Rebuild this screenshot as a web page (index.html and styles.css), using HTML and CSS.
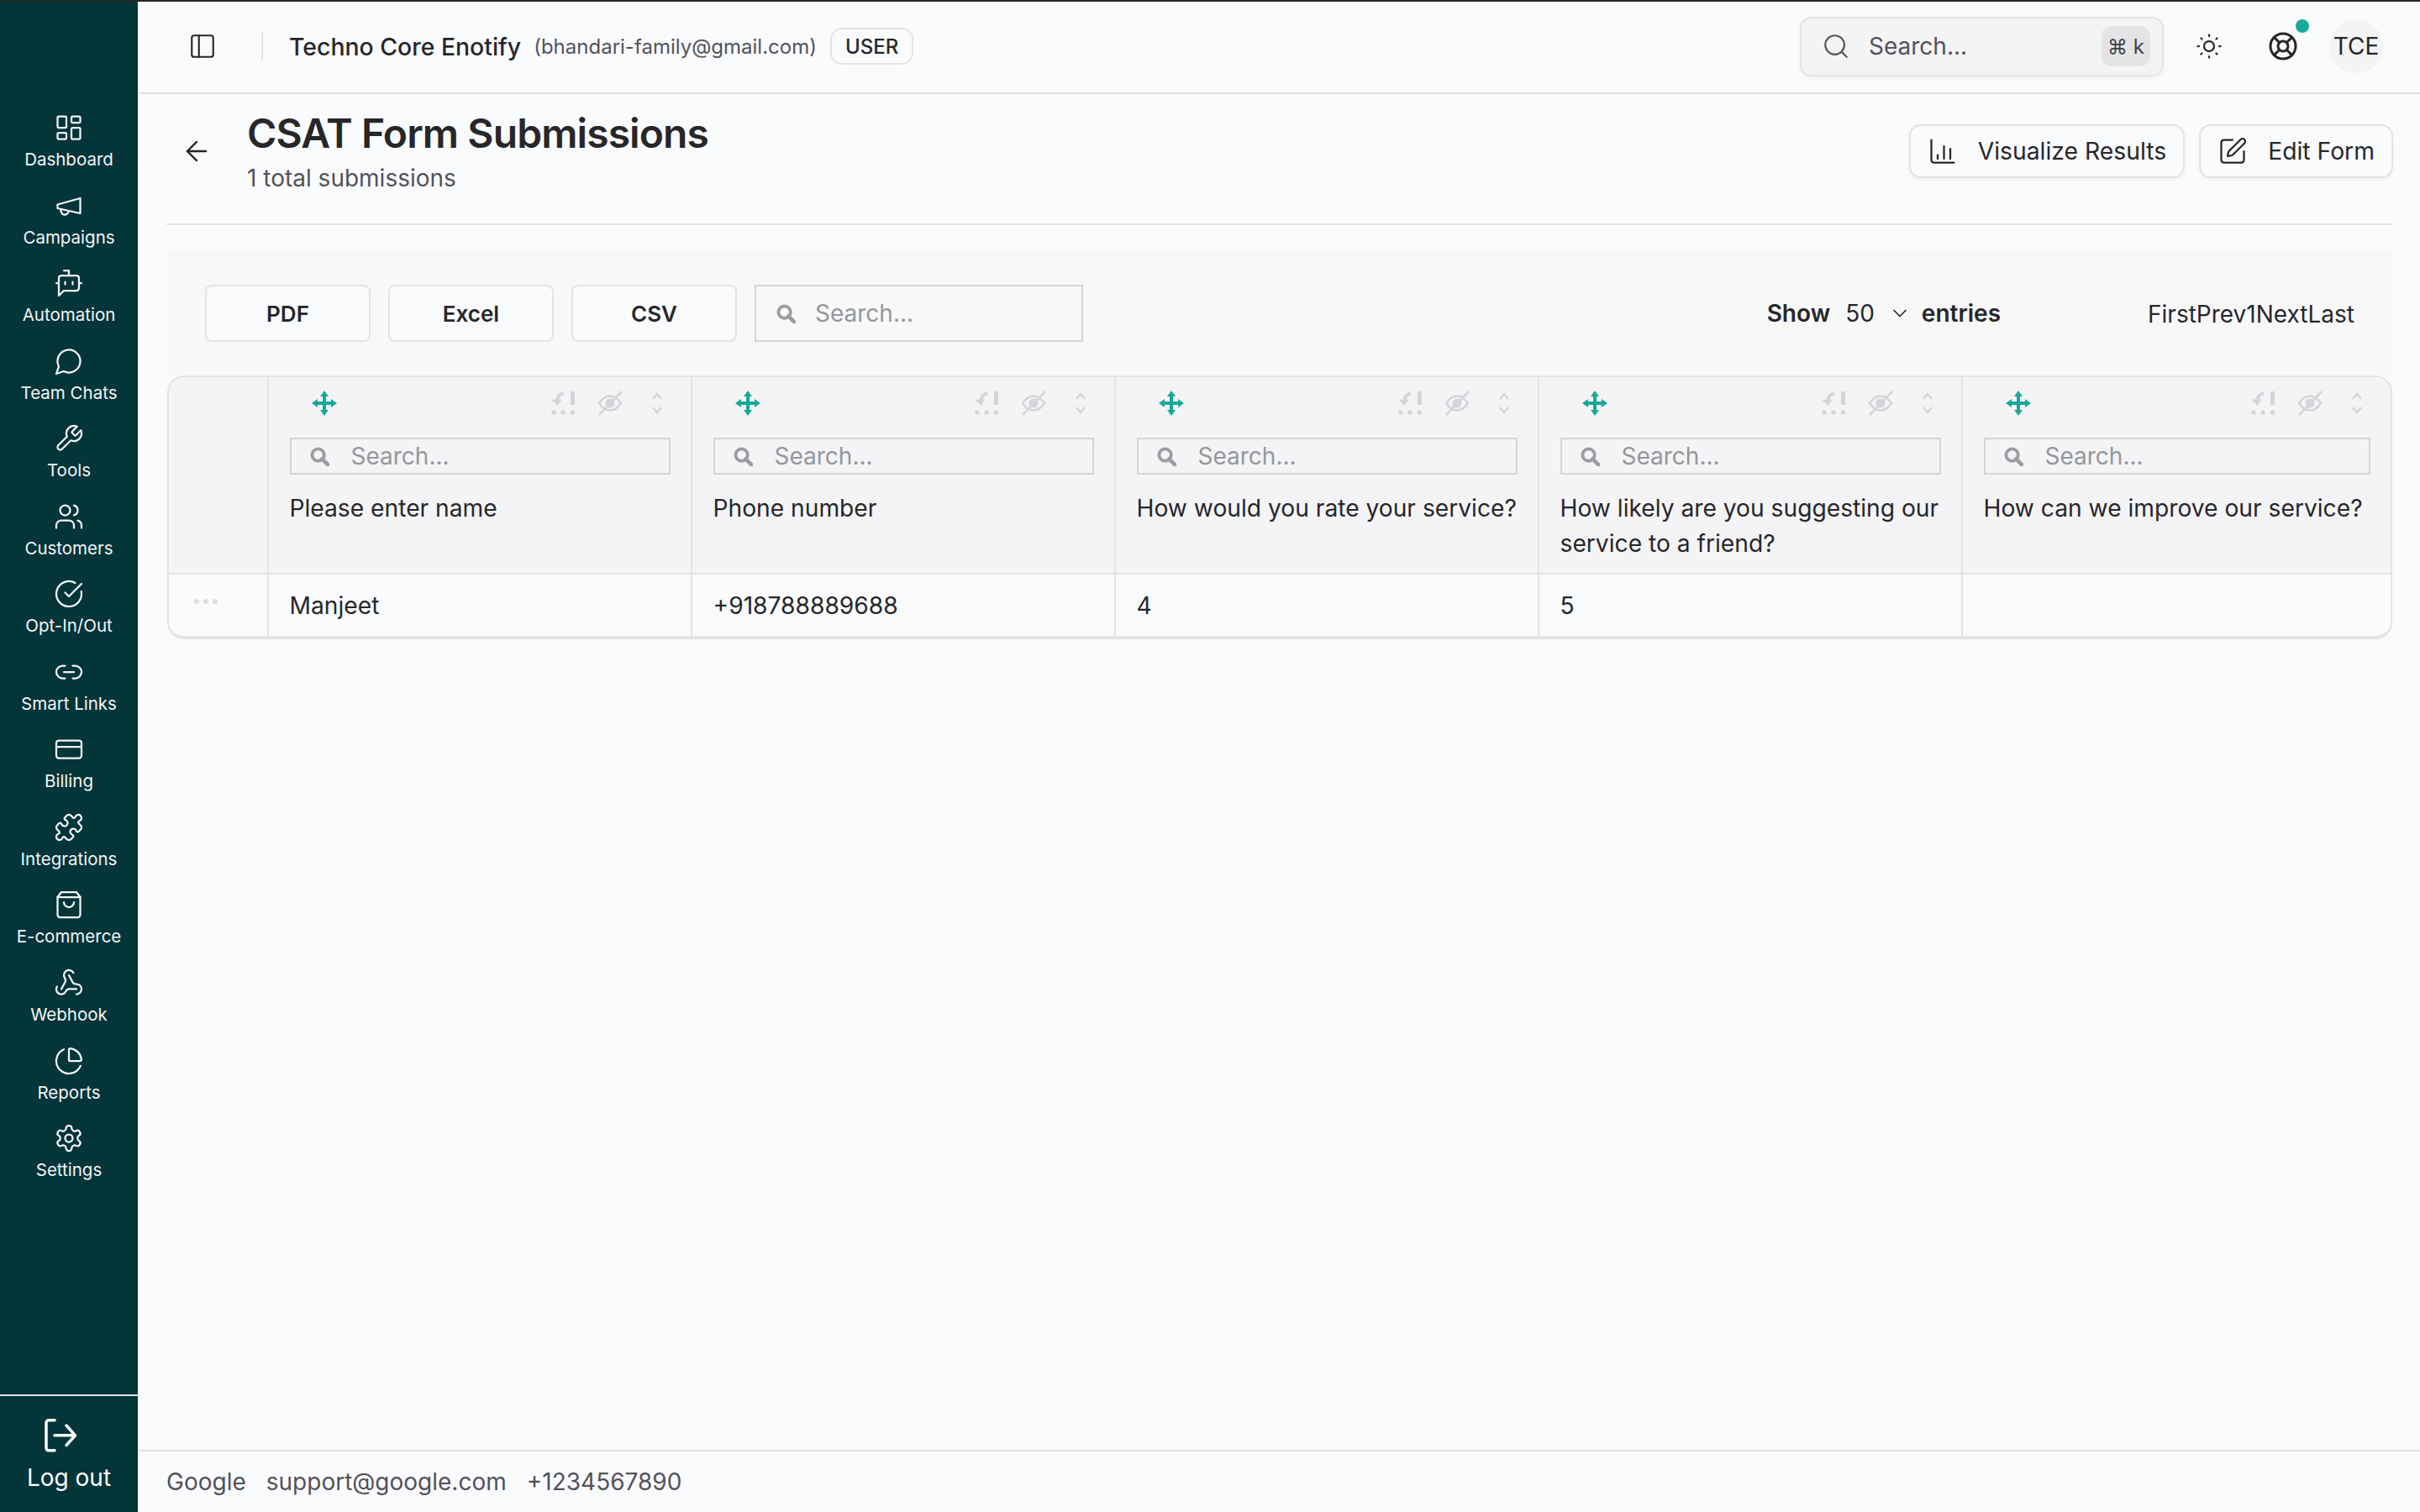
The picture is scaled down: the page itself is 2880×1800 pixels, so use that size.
FILE: index.html
```html
<!DOCTYPE html>
<html lang="en">
<head>
    <meta charset="UTF-8">
    <meta name="viewport" content="width=device-width, initial-scale=1.0">
    <title>CSAT Form Submissions</title>
    <link rel="stylesheet" href="styles.css">
</head>
<body>
<svg class="sprite" xmlns="http://www.w3.org/2000/svg">
    <symbol id="i-move" viewBox="0 0 30 30">
        <path d="M13 5h4v8h8v4h-8v8h-4v-8H5v-4h8z" fill="currentColor"/>
        <path d="M15 0l5 7H10zM15 30l-5-7h10zM0 15l7-5v10zM30 15l-7 5V10z" fill="currentColor"/>
    </symbol>
    <symbol id="i-sort" viewBox="0 0 28 28">
        <path d="M15 2.500C10.500 3 8 6 7.500 10" fill="none" stroke="currentColor" stroke-width="3.800"/>
        <path d="M0 9.500h12.500l-5 7.500z" fill="currentColor"/>
        <rect x="23" y="0" width="5" height="16" fill="currentColor"/>
        <circle cx="3" cy="25" r="2.700" fill="currentColor"/>
        <circle cx="14" cy="25" r="2.700" fill="currentColor"/>
        <circle cx="25.500" cy="25" r="2.700" fill="currentColor"/>
    </symbol>
    <symbol id="i-eye" viewBox="0 0 30 30">
        <path d="M2 15C6 9 10 6.500 15 6.500S24 9 28 15c-4 6-8 8.500-13 8.500S6 21 2 15z" fill="none" stroke="currentColor" stroke-width="2.600"/>
        <circle cx="15" cy="15" r="5.500" fill="currentColor"/>
        <path d="M2 29L29 1" stroke="currentColor" stroke-width="2.600"/>
    </symbol>
    <symbol id="i-chevs" viewBox="0 0 12 28">
        <path d="M1 9l5-6 5 6M1 19l5 6 5-6" fill="none" stroke="currentColor" stroke-width="2.600"/>
    </symbol>
    <symbol id="i-find" viewBox="0 0 24 24">
        <circle cx="10" cy="10" r="7.500" fill="none" stroke="currentColor" stroke-width="4"/>
        <path d="M15 15l7 7" stroke="currentColor" stroke-width="5" stroke-linecap="round"/>
    </symbol>
</svg>

<div class="app">
    <aside class="sidebar">
        <nav class="side-nav">
            <a class="side-item"><svg class="ico" viewBox="0 0 24 24"><rect x="3" y="3" width="7" height="9" rx="1"/><rect x="14" y="3" width="7" height="5" rx="1"/><rect x="14" y="12" width="7" height="9" rx="1"/><rect x="3" y="16" width="7" height="5" rx="1"/></svg><span>Dashboard</span></a>
            <a class="side-item"><svg class="ico" viewBox="0 0 24 24"><path d="m3 11 18-5v12L3 14v-3z"/><path d="M11.6 16.800a3 3 0 1 1-5.800-1.600"/></svg><span>Campaigns</span></a>
            <a class="side-item"><svg class="ico" viewBox="0 0 24 24"><path d="M12 6V2H8"/><path d="m8 18-4 4V8a2 2 0 0 1 2-2h12a2 2 0 0 1 2 2v8a2 2 0 0 1-2 2Z"/><path d="M2 12h2"/><path d="M9 11v2"/><path d="M15 11v2"/><path d="M20 12h2"/></svg><span>Automation</span></a>
            <a class="side-item"><svg class="ico" viewBox="0 0 24 24"><path d="M7.900 20A9 9 0 1 0 4 16.100L2 22Z"/></svg><span>Team Chats</span></a>
            <a class="side-item"><svg class="ico" viewBox="0 0 24 24"><path d="M14.700 6.300a1 1 0 0 0 0 1.400l1.600 1.600a1 1 0 0 0 1.400 0l3.770-3.770a6 6 0 0 1-7.940 7.940l-6.910 6.910a2.120 2.120 0 0 1-3-3l6.910-6.910a6 6 0 0 1 7.940-7.940l-3.760 3.760z"/></svg><span>Tools</span></a>
            <a class="side-item"><svg class="ico" viewBox="0 0 24 24"><path d="M16 21v-2a4 4 0 0 0-4-4H6a4 4 0 0 0-4 4v2"/><circle cx="9" cy="7" r="4"/><path d="M22 21v-2a4 4 0 0 0-3-3.870"/><path d="M16 3.130a4 4 0 0 1 0 7.750"/></svg><span>Customers</span></a>
            <a class="side-item"><svg class="ico" viewBox="0 0 24 24"><path d="M21.800 10A10 10 0 1 1 17 3.340"/><path d="m9 11 3 3L22 4"/></svg><span>Opt-In/Out</span></a>
            <a class="side-item"><svg class="ico" viewBox="0 0 24 24"><path d="M9 17H7A5 5 0 0 1 7 7h2"/><path d="M15 7h2a5 5 0 1 1 0 10h-2"/><path d="M8 12h8"/></svg><span>Smart Links</span></a>
            <a class="side-item"><svg class="ico" viewBox="0 0 24 24"><rect x="2" y="5" width="20" height="14" rx="2"/><path d="M2 10h20"/></svg><span>Billing</span></a>
            <a class="side-item"><svg class="ico" viewBox="0 0 24 24"><path d="M19.439 7.850c-.049.322.059.648.289.878l1.568 1.568c.47.47.706 1.087.706 1.704s-.235 1.233-.706 1.704l-1.611 1.611a.98.98 0 0 1-.837.276c-.47-.07-.802-.48-.968-.925a2.501 2.501 0 1 0-3.214 3.214c.446.166.855.497.925.968a.979.979 0 0 1-.276.837l-1.610 1.610a2.404 2.404 0 0 1-1.705.707 2.402 2.402 0 0 1-1.704-.706l-1.568-1.568a1.026 1.026 0 0 0-.877-.290c-.493.074-.84.504-1.020.968a2.500 2.500 0 1 1-3.237-3.237c.464-.18.894-.527.967-1.020a1.026 1.026 0 0 0-.289-.877l-1.568-1.568A2.402 2.402 0 0 1 1.998 12c0-.617.236-1.234.706-1.704L4.230 8.770c.24-.24.581-.353.917-.303.515.077.877.528 1.073 1.010a2.500 2.500 0 1 0 3.259-3.259c-.482-.196-.933-.558-1.010-1.073-.05-.336.062-.676.303-.917l1.525-1.525A2.402 2.402 0 0 1 12 1.998c.617 0 1.234.236 1.704.706l1.568 1.568c.23.23.556.338.877.29.493-.074.84-.504 1.020-.968a2.500 2.500 0 1 1 3.237 3.237c-.464.18-.894.527-.967 1.020Z"/></svg><span>Integrations</span></a>
            <a class="side-item"><svg class="ico" viewBox="0 0 24 24"><path d="M6 2 3 6v14a2 2 0 0 0 2 2h14a2 2 0 0 0 2-2V6l-3-4Z"/><path d="M3 6h18"/><path d="M16 10a4 4 0 0 1-8 0"/></svg><span>E-commerce</span></a>
            <a class="side-item"><svg class="ico" viewBox="0 0 24 24"><path d="M18 16.980h-5.990c-1.100 0-1.950.94-2.480 1.900A4 4 0 0 1 2 17c.01-.7.2-1.400.57-2"/><path d="m6 17 3.130-5.780c.53-.97.1-2.180-.5-3.100a4 4 0 1 1 6.890-4.060"/><path d="m12 6 3.130 5.730C15.660 12.700 16.900 13 18 13a4 4 0 0 1 0 8"/></svg><span>Webhook</span></a>
            <a class="side-item"><svg class="ico" viewBox="0 0 24 24"><path d="M21 12c.552 0 1.005-.449.95-.998a10 10 0 0 0-8.953-8.951c-.55-.055-.998.398-.998.95v8a1 1 0 0 0 1 1z"/><path d="M21.210 15.890A10 10 0 1 1 8 2.830"/></svg><span>Reports</span></a>
            <a class="side-item"><svg class="ico" viewBox="0 0 24 24"><path d="M12.220 2h-.44a2 2 0 0 0-2 2v.18a2 2 0 0 1-1 1.730l-.43.25a2 2 0 0 1-2 0l-.15-.08a2 2 0 0 0-2.730.73l-.22.38a2 2 0 0 0 .73 2.730l.15.1a2 2 0 0 1 1 1.720v.51a2 2 0 0 1-1 1.740l-.15.09a2 2 0 0 0-.73 2.730l.22.38a2 2 0 0 0 2.730.73l.15-.08a2 2 0 0 1 2 0l.43.25a2 2 0 0 1 1 1.730V20a2 2 0 0 0 2 2h.44a2 2 0 0 0 2-2v-.18a2 2 0 0 1 1-1.730l.43-.25a2 2 0 0 1 2 0l.15.08a2 2 0 0 0 2.730-.73l.22-.39a2 2 0 0 0-.73-2.730l-.15-.08a2 2 0 0 1-1-1.740v-.5a2 2 0 0 1 1-1.740l.15-.09a2 2 0 0 0 .73-2.730l-.22-.38a2 2 0 0 0-2.730-.73l-.15.08a2 2 0 0 1-2 0l-.43-.25a2 2 0 0 1-1-1.730V4a2 2 0 0 0-2-2z"/><circle cx="12" cy="12" r="3"/></svg><span>Settings</span></a>
        </nav>
        <a class="logout">
            <svg class="logout-ico" viewBox="0 0 40 40"><path d="M13 1.800H6a3 3 0 0 0-3 3v30a3 3 0 0 0 3 3h7"/><path d="M13 19.800h24"/><path d="M27 8l10.500 11.800L27 31.500"/></svg>
            <span>Log out</span>
        </a>
    </aside>

    <div class="main">
        <header class="topbar">
            <svg class="ico ico-dark toggle" viewBox="0 0 24 24"><rect x="3" y="3" width="18" height="18" rx="2"/><path d="M9 3v18"/></svg>
            <span class="top-divider"></span>
            <span class="org-name">Techno Core Enotify</span>
            <span class="org-mail">(bhandari-family@gmail.com)</span>
            <span class="role-badge">USER</span>
            <div class="global-search">
                <svg class="ico ico-gray" viewBox="0 0 24 24"><circle cx="11" cy="11" r="8"/><path d="m21 21-4.300-4.300"/></svg>
                <span class="global-search-text">Search...</span>
                <kbd class="shortcut">⌘ k</kbd>
            </div>
            <svg class="ico ico-dark sun" viewBox="0 0 24 24"><circle cx="12" cy="12" r="4"/><path d="M12 3v1"/><path d="M12 20v1"/><path d="M3 12h1"/><path d="M20 12h1"/><path d="m18.364 5.636-.707.707"/><path d="m6.343 17.657-.707.707"/><path d="m5.636 5.636.707.707"/><path d="m17.657 17.657.707.707"/></svg>
            <span class="help">
                <svg class="ico ico-dark ico-bold" viewBox="0 0 24 24"><circle cx="12" cy="12" r="10"/><path d="m4.930 4.930 4.240 4.240"/><path d="m14.830 9.170 4.240-4.240"/><path d="m14.830 14.830 4.240 4.240"/><path d="m9.170 14.830-4.240 4.240"/><circle cx="12" cy="12" r="4"/></svg>
                <span class="help-dot"></span>
            </span>
            <span class="avatar">TCE</span>
        </header>

        <main class="content">
            <div class="page-head">
                <svg class="ico ico-dark back" viewBox="0 0 24 24"><path d="m12 19-7-7 7-7"/><path d="M19 12H5"/></svg>
                <div class="page-title">
                    <h1>CSAT Form Submissions</h1>
                    <p>1 total submissions</p>
                </div>
                <div class="page-actions">
                    <button class="action-btn">
                        <svg class="ico ico-dark" viewBox="0 0 24 24"><path d="M3 3v16a2 2 0 0 0 2 2h16"/><path d="M8 18v-3"/><path d="M13 18V8"/><path d="M18 18v-8"/></svg>
                        Visualize Results
                    </button>
                    <button class="action-btn">
                        <svg class="ico ico-dark" viewBox="0 0 24 24"><path d="M12 3H5a2 2 0 0 0-2 2v14a2 2 0 0 0 2 2h14a2 2 0 0 0 2-2v-7"/><path d="M18.375 2.625a1 1 0 0 1 3 3l-9.013 9.014a2 2 0 0 1-.853.505l-2.873.84a.5.5 0 0 1-.62-.62l.84-2.873a2 2 0 0 1 .506-.852z"/></svg>
                        Edit Form
                    </button>
                </div>
            </div>

            <div class="grid-tools">
                <button class="export-btn">PDF</button>
                <button class="export-btn">Excel</button>
                <button class="export-btn">CSV</button>
                <div class="search-box tools-search">
                    <svg class="find"><use href="#i-find"/></svg>
                    <span>Search...</span>
                </div>
                <div class="entries">
                    <b>Show</b>
                    <span class="entries-num">50</span>
                    <svg class="ico ico-dark entries-chev" viewBox="0 0 24 24"><path d="m6 9 6 6 6-6"/></svg>
                    <b>entries</b>
                </div>
                <div class="pager">FirstPrev1NextLast</div>
            </div>

            <div class="grid-wrap">
                <table class="grid">
                    <colgroup>
                        <col class="col-menu">
                        <col class="col-data">
                        <col class="col-data">
                        <col class="col-data">
                        <col class="col-data">
                        <col>
                    </colgroup>
                    <thead>
                        <tr>
                            <th></th>
                            <th>
                                <div class="th-icons">
                                    <svg class="i-move"><use href="#i-move"/></svg>
                                    <svg class="i-sort"><use href="#i-sort"/></svg>
                                    <svg class="i-eye"><use href="#i-eye"/></svg>
                                    <svg class="i-chevs"><use href="#i-chevs"/></svg>
                                </div>
                                <div class="search-box"><svg class="find"><use href="#i-find"/></svg><span>Search...</span></div>
                                <div class="th-label">Please enter name</div>
                            </th>
                            <th>
                                <div class="th-icons">
                                    <svg class="i-move"><use href="#i-move"/></svg>
                                    <svg class="i-sort"><use href="#i-sort"/></svg>
                                    <svg class="i-eye"><use href="#i-eye"/></svg>
                                    <svg class="i-chevs"><use href="#i-chevs"/></svg>
                                </div>
                                <div class="search-box"><svg class="find"><use href="#i-find"/></svg><span>Search...</span></div>
                                <div class="th-label">Phone number</div>
                            </th>
                            <th>
                                <div class="th-icons">
                                    <svg class="i-move"><use href="#i-move"/></svg>
                                    <svg class="i-sort"><use href="#i-sort"/></svg>
                                    <svg class="i-eye"><use href="#i-eye"/></svg>
                                    <svg class="i-chevs"><use href="#i-chevs"/></svg>
                                </div>
                                <div class="search-box"><svg class="find"><use href="#i-find"/></svg><span>Search...</span></div>
                                <div class="th-label">How would you rate your service?</div>
                            </th>
                            <th>
                                <div class="th-icons">
                                    <svg class="i-move"><use href="#i-move"/></svg>
                                    <svg class="i-sort"><use href="#i-sort"/></svg>
                                    <svg class="i-eye"><use href="#i-eye"/></svg>
                                    <svg class="i-chevs"><use href="#i-chevs"/></svg>
                                </div>
                                <div class="search-box"><svg class="find"><use href="#i-find"/></svg><span>Search...</span></div>
                                <div class="th-label">How likely are you suggesting our service to a friend?</div>
                            </th>
                            <th>
                                <div class="th-icons">
                                    <svg class="i-move"><use href="#i-move"/></svg>
                                    <svg class="i-sort"><use href="#i-sort"/></svg>
                                    <svg class="i-eye"><use href="#i-eye"/></svg>
                                    <svg class="i-chevs"><use href="#i-chevs"/></svg>
                                </div>
                                <div class="search-box"><svg class="find"><use href="#i-find"/></svg><span>Search...</span></div>
                                <div class="th-label">How can we improve our service?</div>
                            </th>
                        </tr>
                    </thead>
                    <tbody>
                        <tr>
                            <td><span class="row-menu"><i></i><i></i><i></i></span></td>
                            <td>Manjeet</td>
                            <td>+918788889688</td>
                            <td>4</td>
                            <td>5</td>
                            <td></td>
                        </tr>
                    </tbody>
                </table>
            </div>
        </main>

        <footer class="footer">
            <span>Google</span>
            <span>support@google.com</span>
            <span>+1234567890</span>
        </footer>
    </div>
</div>
</body>
</html>
```

FILE: styles.css
```css
* {
    box-sizing: border-box;
}

body {
    margin: 0;
    font-family: Inter, "Noto Sans", sans-serif;
    color: #27272a;
    background: #fafbfd;
}

.sprite {
    display: none;
}

.app {
    display: flex;
    width: 2880px;
    height: 1800px;
    border-top: 2px solid #27272a;
    overflow: hidden;
}

/* sidebar */
.sidebar {
    width: 164px;
    flex-shrink: 0;
    display: flex;
    flex-direction: column;
    background: #033539;
    color: #f4f4f5;
}

.side-nav {
    flex: 1;
    padding-top: 132px;
    display: flex;
    flex-direction: column;
    gap: 24.550px;
}

.side-item {
    display: flex;
    flex-direction: column;
    align-items: center;
    gap: 8px;
    font-size: 20.500px;
    line-height: 24px;
    white-space: nowrap;
}

.ico {
    width: 36px;
    height: 36px;
    fill: none;
    stroke: currentColor;
    stroke-width: 1.500;
    stroke-linecap: round;
    stroke-linejoin: round;
    flex-shrink: 0;
}

.ico-dark {
    color: #27272a;
}

.ico-gray {
    width: 34px;
    height: 34px;
    color: #52525b;
}

.ico-bold {
    stroke-width: 2;
}

.logout {
    height: 140px;
    padding-top: 27px;
    border-top: 2px solid #e4e4e7;
    display: flex;
    flex-direction: column;
    align-items: center;
    gap: 12px;
    font-size: 28px;
    line-height: 36px;
    color: #fff;
}

.logout-ico {
    width: 40px;
    height: 40px;
    margin-right: 20px;
    fill: none;
    stroke: currentColor;
    stroke-width: 3.500;
    stroke-linecap: round;
    stroke-linejoin: round;
}

/* main column */
.main {
    flex: 1;
    min-width: 0;
    display: flex;
    flex-direction: column;
}

.topbar {
    height: 110px;
    flex-shrink: 0;
    display: flex;
    align-items: center;
    padding: 0 44px 2px 60px;
    border-bottom: 2px solid #e4e4e7;
}

.toggle {
    width: 34px;
    height: 34px;
}

.top-divider {
    width: 2px;
    height: 34px;
    margin: 0 31px 0 53px;
    background: #e4e4e7;
}

.org-name {
    font-size: 28.400px;
    font-weight: 500;
}

.org-mail {
    margin-left: 15px;
    font-size: 24px;
    color: #52525b;
}

.role-badge {
    margin-left: 16px;
    padding: 0 16px;
    height: 44px;
    display: flex;
    align-items: center;
    border: 2px solid #e4e4e7;
    border-radius: 14px;
    font-size: 24px;
    font-weight: 500;
}

.global-search {
    margin-left: auto;
    width: 433px;
    height: 71px;
    padding: 0 14px 0 24px;
    display: flex;
    align-items: center;
    background: #f4f4f5;
    border: 2px solid #e4e4e7;
    border-radius: 14px;
    box-shadow: 0 2px 4px rgba(0, 0, 0, .05);
}

.global-search-text {
    margin-left: 22px;
    font-size: 28px;
    color: #52525b;
}

.shortcut {
    margin-left: auto;
    width: 58px;
    height: 48px;
    display: flex;
    align-items: center;
    justify-content: center;
    background: #e4e4e7;
    border-radius: 12px;
    font-family: Inter, "DejaVu Sans", sans-serif;
    font-size: 24px;
    color: #3f3f46;
}

.sun {
    margin-left: 36px;
}

.help {
    position: relative;
    display: flex;
    margin-left: 52px;
}

.help-dot {
    position: absolute;
    top: -14px;
    right: -13px;
    width: 16px;
    height: 16px;
    border-radius: 50%;
    background: #17a99b;
}

.avatar {
    margin-left: 37px;
    width: 64px;
    height: 64px;
    display: flex;
    align-items: center;
    justify-content: center;
    background: #f4f4f5;
    border-radius: 50%;
    font-size: 28px;
}

.content {
    flex: 1;
    padding: 0 32px 0 34px;
}

.page-head {
    height: 156px;
    padding: 0 0 18px 17px;
    display: flex;
    align-items: center;
    border-bottom: 2px solid #e4e4e7;
}

.back {
    width: 38px;
    height: 38px;
}

.page-title {
    margin-left: 41px;
}

.page-title h1 {
    margin: 0;
    font-size: 48px;
    line-height: 58px;
    font-weight: 600;
    letter-spacing: -.900px;
}

.page-title p {
    margin: 6px 0 0;
    font-size: 28px;
    line-height: 36px;
    color: #52525b;
}

.page-actions {
    margin-left: auto;
    display: flex;
    gap: 17px;
}

.action-btn {
    height: 64px;
    padding: 0 20px;
    display: flex;
    align-items: center;
    gap: 24px;
    background: #fafbfd;
    border: 2px solid #e4e4e7;
    border-radius: 14px;
    box-shadow: 0 2px 4px rgba(0, 0, 0, .05);
    font-family: inherit;
    font-size: 28.300px;
    color: #27272a;
}

.grid-tools {
    margin-top: 31px;
    height: 148px;
    padding: 0 46px;
    display: flex;
    align-items: center;
    gap: 21px;
    background: #f8f8f9;
}

.export-btn {
    width: 197px;
    height: 68px;
    background: #fafbfd;
    border: 2px solid #e4e4e7;
    border-radius: 8px;
    font-family: inherit;
    font-size: 26px;
    font-weight: 600;
    color: #27272a;
}

.search-box {
    height: 44px;
    display: flex;
    align-items: center;
    gap: 26px;
    padding-left: 22px;
    border: 2px solid #d4d4d8;
    font-size: 28px;
    font-weight: 400;
    color: #94979c;
}

.tools-search {
    width: 391px;
    height: 68px;
    padding-left: 24px;
    gap: 23px;
}

.find {
    width: 23px;
    height: 23px;
    color: #9a9ea1;
    flex-shrink: 0;
}

.entries {
    margin-left: auto;
    display: flex;
    align-items: center;
    font-size: 28px;
}

.entries b {
    font-weight: 600;
}

.entries-num {
    margin-left: 18px;
}

.entries-chev {
    width: 28px;
    height: 28px;
    margin: 0 12px 0 16px;
}

.pager {
    margin: 2px 0 0 154px;
    font-size: 28px;
}

.grid-wrap {
    width: 2648px;
    margin-left: 1px;
    border: 2px solid #e4e4e7;
    border-bottom-width: 4px;
    border-radius: 20px;
    overflow: hidden;
}

.grid {
    width: 100%;
    table-layout: fixed;
    border-collapse: separate;
    border-spacing: 0;
    font-size: 28.200px;
}

.col-menu {
    width: 116.500px;
}

.col-data {
    width: 504px;
}

.grid th {
    height: 235px;
    padding: 16px 14px 0 25px;
    vertical-align: top;
    background: #f4f4f6;
    border-left: 2px solid #e4e4e7;
    border-bottom: 2px solid #e4e4e7;
    font-weight: 400;
    text-align: left;
}

.grid th:first-child,
.grid td:first-child {
    border-left: 0;
}

.grid th .search-box {
    margin: 26px 10px 0 0;
}

.th-icons {
    display: flex;
    align-items: center;
    height: 30px;
    padding-left: 26px;
    color: #d4d5d8;
}

.i-move {
    width: 30px;
    height: 30px;
    margin-right: auto;
    color: #17a99b;
}

.i-sort {
    width: 28px;
    height: 28px;
}

.i-eye {
    width: 30px;
    height: 30px;
    margin-left: 27px;
}

.i-chevs {
    width: 12px;
    height: 28px;
    margin: 0 20px 0 35px;
}

.th-label {
    margin-top: 19px;
    line-height: 42px;
}

.grid td {
    height: 73px;
    padding: 0 25px;
    border-left: 2px solid #e4e4e7;
}

.row-menu {
    display: flex;
    gap: 5px;
    margin: -8px 0 0 5px;
}

.row-menu i {
    width: 6px;
    height: 6px;
    border-radius: 50%;
    background: #dcdde0;
}

.footer {
    height: 74px;
    flex-shrink: 0;
    padding: 0 34px;
    display: flex;
    align-items: center;
    gap: 24px;
    border-top: 2px solid #e4e4e7;
    font-size: 28px;
    color: #52525b;
}
```
